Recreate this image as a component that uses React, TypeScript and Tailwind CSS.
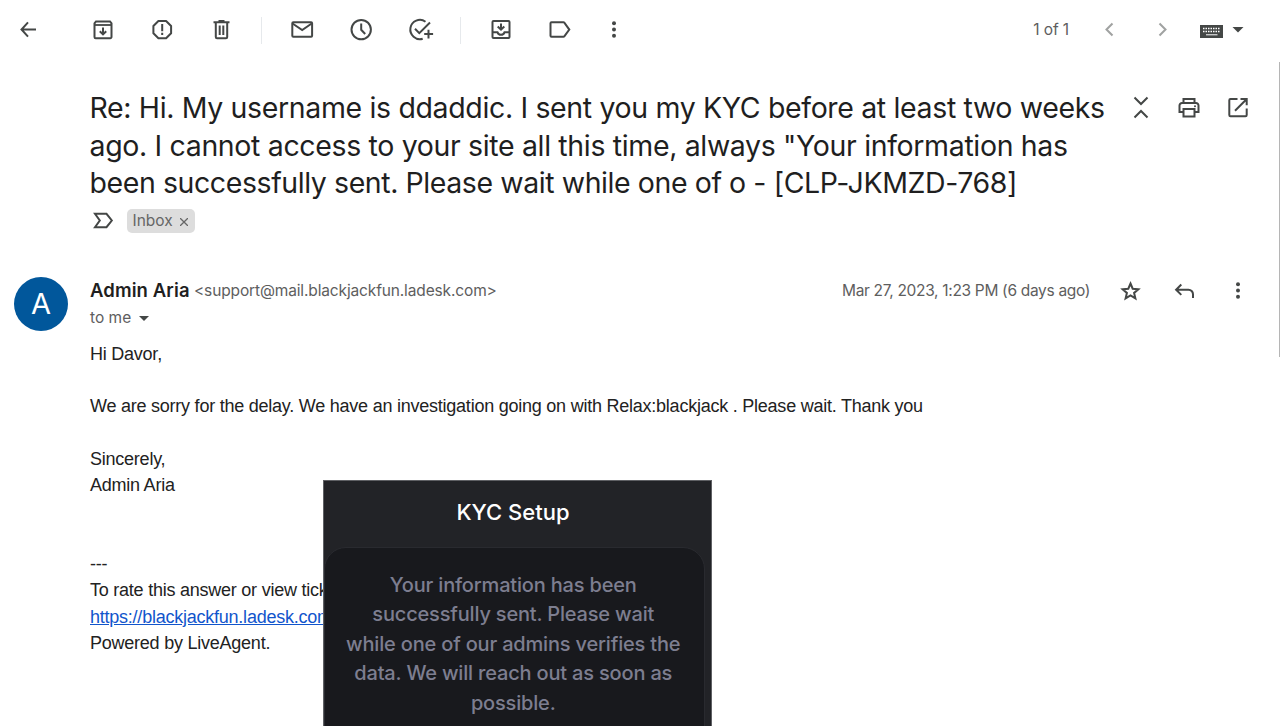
import type { ReactNode } from "react";

const Icon = ({ children, className = "" }: { children: ReactNode; className?: string }) => (
  <svg
    viewBox="0 0 28 28"
    className={`size-7 shrink-0 ${className}`}
    fill="none"
    stroke="#444746"
    strokeWidth="2"
  >
    {children}
  </svg>
);

const Dots = ({ className }: { className?: string }) => (
  <Icon className={className}>
    <g fill="#444746" stroke="none">
      <circle cx="14" cy="7.3" r="2" />
      <circle cx="14" cy="13.5" r="2" />
      <circle cx="14" cy="19.7" r="2" />
    </g>
  </Icon>
);

const Toolbar = () => (
  <div className="flex h-[60px] items-center pl-3.5">
    <Icon>
      <path d="M14 6.3 7.5 13.5l6.5 7.2M7.5 13.5H22" />
    </Icon>
    <Icon className="ml-[47px]">
      <path d="M7 5.4h14l1.5 2V21a1.2 1.2 0 0 1-1.2 1.2H6.7A1.2 1.2 0 0 1 5.5 21V7.4z" />
      <path d="M5 9h18" strokeWidth="1.8" />
      <path d="M14 11.5v6.5M10.8 15.2l3.2 3.2 3.2-3.2" />
    </Icon>
    <Icon className="ml-[31px]">
      <path d="M10.4 5h7.7l5 5v7.3l-5 5h-7.7l-5-5V10z" strokeLinejoin="round" />
      <path d="M14.2 8v7.3M14.2 16.8v2.2" />
    </Icon>
    <Icon className="ml-[31px]">
      <path d="M6.5 6.3h16M11.5 5h6" />
      <path d="M8.8 6.5v14.5a1.2 1.2 0 0 0 1.2 1.2h9a1.2 1.2 0 0 0 1.2-1.2V6.5" />
      <path d="M12.7 9.5v9.5M16.3 9.5v9.5" />
    </Icon>
    <div className="ml-[26px] h-[27px] w-px bg-[#e6e9ec]" />
    <Icon className="ml-[26px]">
      <rect x="4.3" y="6.3" width="19.8" height="14.5" rx="1" />
      <path d="M4.5 7.5 14.2 14l9.5-6.5" />
    </Icon>
    <Icon className="ml-[31px]">
      <circle cx="14.2" cy="13.6" r="9.7" />
      <path d="M14.2 7.5v6.3l4 4.2" />
    </Icon>
    <Icon className="ml-[31px]">
      <path d="M19.5 5.7A9.6 9.6 0 1 0 16.7 22.7" />
      <path d="m9 12.8 4.3 4.3L24 6.5M22.5 13.7v8.7M18.2 18h8.9" />
    </Icon>
    <div className="ml-[26px] h-[27px] w-px bg-[#e6e9ec]" />
    <Icon className="ml-[26px]">
      <rect x="5.5" y="5" width="17" height="17" rx="1" />
      <path d="M5.5 16.3h5c.6 1.7 1.9 2.5 3.5 2.5s2.9-.8 3.5-2.5h5" />
      <path d="M14 7.5v6M10.7 10.5 14 13.7l3.3-3.2" />
    </Icon>
    <Icon className="ml-[31px]">
      <path d="M5.5 6.3h12a1 1 0 0 1 .8.4l5 6.9-5 6.8a1 1 0 0 1-.8.4h-12a1 1 0 0 1-1-1V7.3a1 1 0 0 1 1-1z" />
    </Icon>
    <Dots className="ml-[26px]" />

    <span className="ml-auto text-[15.5px] tracking-[-0.1px] text-[#5e5e5e]">1 of 1</span>
    <Icon className="ml-[26px] opacity-50">
      <path d="m17.5 7.5-6 6 6 6" />
    </Icon>
    <Icon className="ml-[25px] opacity-50">
      <path d="m11.5 7.5 6 6-6 6" />
    </Icon>
    <svg viewBox="0 0 46 28" className="mr-[34px] ml-6 h-7 w-[46px]" fill="#444746">
      <path d="M0 9h23v13H0z" />
      <path d="M3 12.5h17.5M3 15.5h17.5" stroke="#fff" strokeWidth="1.5" strokeDasharray="1.5 1" />
      <path d="M6 18.8h11.5" stroke="#fff" strokeWidth="1" />
      <path d="M32.5 11h11L38 16.5z" />
    </svg>
  </div>
);

const Subject = () => (
  <div className="mt-[29px] flex pl-[89.5px]">
    <h1 className="w-[1037.5px] text-[28.5px] leading-[37.5px] font-normal whitespace-nowrap text-[#1f1f1f]">
      <span className="block tracking-[-0.355px]">Re: Hi. My username is ddaddic. I sent you my KYC before at least two weeks</span>
      <span className="block tracking-[-0.35px]">ago. I cannot access to your site all this time, always "Your information has</span>
      <span className="block tracking-[-0.42px]">been successfully sent. Please wait while one of o - [CLP-JKMZD-768]</span>
    </h1>
    <div className="mt-[5px] flex">
      <Icon>
        <path d="m7.5 3.5 6.5 6.5 6.5-6.5M7.5 23.5 14 17l6.5 6.5" />
      </Icon>
      <Icon className="ml-5">
        <path d="M8.5 9V5h11v4M8.5 18h-4v-6.500a2.500 2.500 0 0 1 2.500-2.500h14a2.500 2.500 0 0 1 2.500 2.500V18h-4" />
        <path d="M8.5 15h11v7.500h-11z" />
        <circle cx="20" cy="12.3" r="1" fill="#444746" stroke="none" />
      </Icon>
      <Icon className="ml-[21px]">
        <path d="M13.5 5h-7a1.200 1.200 0 0 0-1.200 1.200V21a1.200 1.200 0 0 0 1.200 1.200h15a1.200 1.200 0 0 0 1.200-1.200v-6.500" />
        <path d="M16.5 5h6.200v6.200M22.500 5.200 11 16.700" />
      </Icon>
    </div>
  </div>
);

const Labels = () => (
  <div className="mt-[7px] flex h-6 items-center pl-[89px]">
    <Icon>
      <path d="M6 6.8h11.5l5.300 6.700-5.300 6.700H6l4.800-6.700z" />
    </Icon>
    <div className="ml-2.5 flex h-6 w-[68px] items-center rounded-[5px] bg-[#ddd] pl-[5.5px] text-[15.5px] text-[#666]">
      <span className="w-[47.5px]">Inbox</span>
      <svg viewBox="0 0 8 8" className="mt-0.5 size-2" stroke="#666" strokeWidth="1.3">
        <path d="m0 0 8 8M8 0 0 8" />
      </svg>
    </div>
  </div>
);

const Sender = () => (
  <div className="mt-11 flex h-16 pl-3.5">
    <div className="flex size-[54px] items-center justify-center rounded-full bg-[#01579b] text-[29px] text-white">
      A
    </div>
    <div className="ml-[22px] whitespace-nowrap">
      <div className="flex h-7 items-center">
        <span className="w-[104px] text-[18.5px] font-semibold tracking-[0.1px] text-[#1f1f1f]">Admin Aria</span>
        <span className="text-[15.5px] tracking-[-0.14px] text-[#5e5e5e]">
          &lt;support@mail.blackjackfun.ladesk.com&gt;
        </span>
      </div>
      <div className="flex h-[27px] items-center text-[15.5px] text-[#5e5e5e]">
        <span className="w-[49px]">to me</span>
        <svg viewBox="0 0 10 5" className="mt-px h-[5px] w-2.5" fill="#444746">
          <path d="M0 0h10L5 5z" />
        </svg>
      </div>
    </div>
    <div className="ml-auto flex h-7 items-center whitespace-nowrap">
      <span className="w-[249px] text-[15.5px] tracking-[-0.32px] text-[#5e5e5e]">
        Mar 27, 2023, 1:23 PM (6 days ago)
      </span>
      <Icon className="ml-[26px]">
        <path d="m13.5 6.500 2.200 5.200 5.700.5-4.300 3.700 1.300 5.500-4.900-2.900-4.900 2.900 1.300-5.500-4.300-3.700 5.700-.5z" />
      </Icon>
      <Icon className="ml-[26px]">
        <path d="m10.3 7.5-5.200 5.200 5.200 5.200M5.300 12.700h12.200a4.500 4.500 0 0 1 4.500 4.500V21" />
      </Icon>
      <Dots className="mr-7 ml-[25px]" />
    </div>
  </div>
);

const MessageBody = () => (
  <div className="pl-[90px] font-['Liberation_Sans',Arial,sans-serif] text-[18px] leading-[26.3px] tracking-[-0.236px] whitespace-pre text-[#222]">
    <p>Hi Davor,</p>
    <p className="mt-[26.6px]">
      We are sorry for the delay. We have an investigation going on with Relax:blackjack . Please wait. Thank you
    </p>
    <p className="mt-[26px]">Sincerely,</p>
    <p>Admin Aria</p>
    <p className="mt-[52.7px]">---</p>
    <p>To rate this answer or view ticket</p>
    <p className="text-[#15c] underline">https://blackjackfun.ladesk.com</p>
    <p>Powered by LiveAgent.</p>
  </div>
);

const KycCard = () => (
  <div className="absolute top-[480px] left-[323px] h-[246px] w-[389px] overflow-hidden border-t border-r border-l border-[#5f6064] bg-[#222327] text-center">
    <h2 className="mr-[9px] h-[66px] pt-4 text-[22px] leading-[30px] font-medium text-white">KYC Setup</h2>
    <div className="h-[220px] w-[381px] rounded-t-[22px] border border-[#292a2f] bg-[#18191d] pt-[22.5px] pr-[2.5px] text-[20px] leading-[29.6px] font-medium tracking-[-0.18px] whitespace-nowrap text-[#7d7e90]">
      <p>Your information has been</p>
      <p>successfully sent. Please wait</p>
      <p>while one of our admins verifies the</p>
      <p>data. We will reach out as soon as</p>
      <p>possible.</p>
    </div>
  </div>
);

const App = () => {
  return (
    <main className="relative h-[726px] w-[1280px] overflow-hidden bg-white font-['Inter',sans-serif]">
      <Toolbar />
      <Subject />
      <Labels />
      <Sender />
      <MessageBody />
      <KycCard />
      <div className="absolute top-[62px] right-0 h-[295px] w-px bg-[#b5b5b5]" />
    </main>
  );
};

export default App;
